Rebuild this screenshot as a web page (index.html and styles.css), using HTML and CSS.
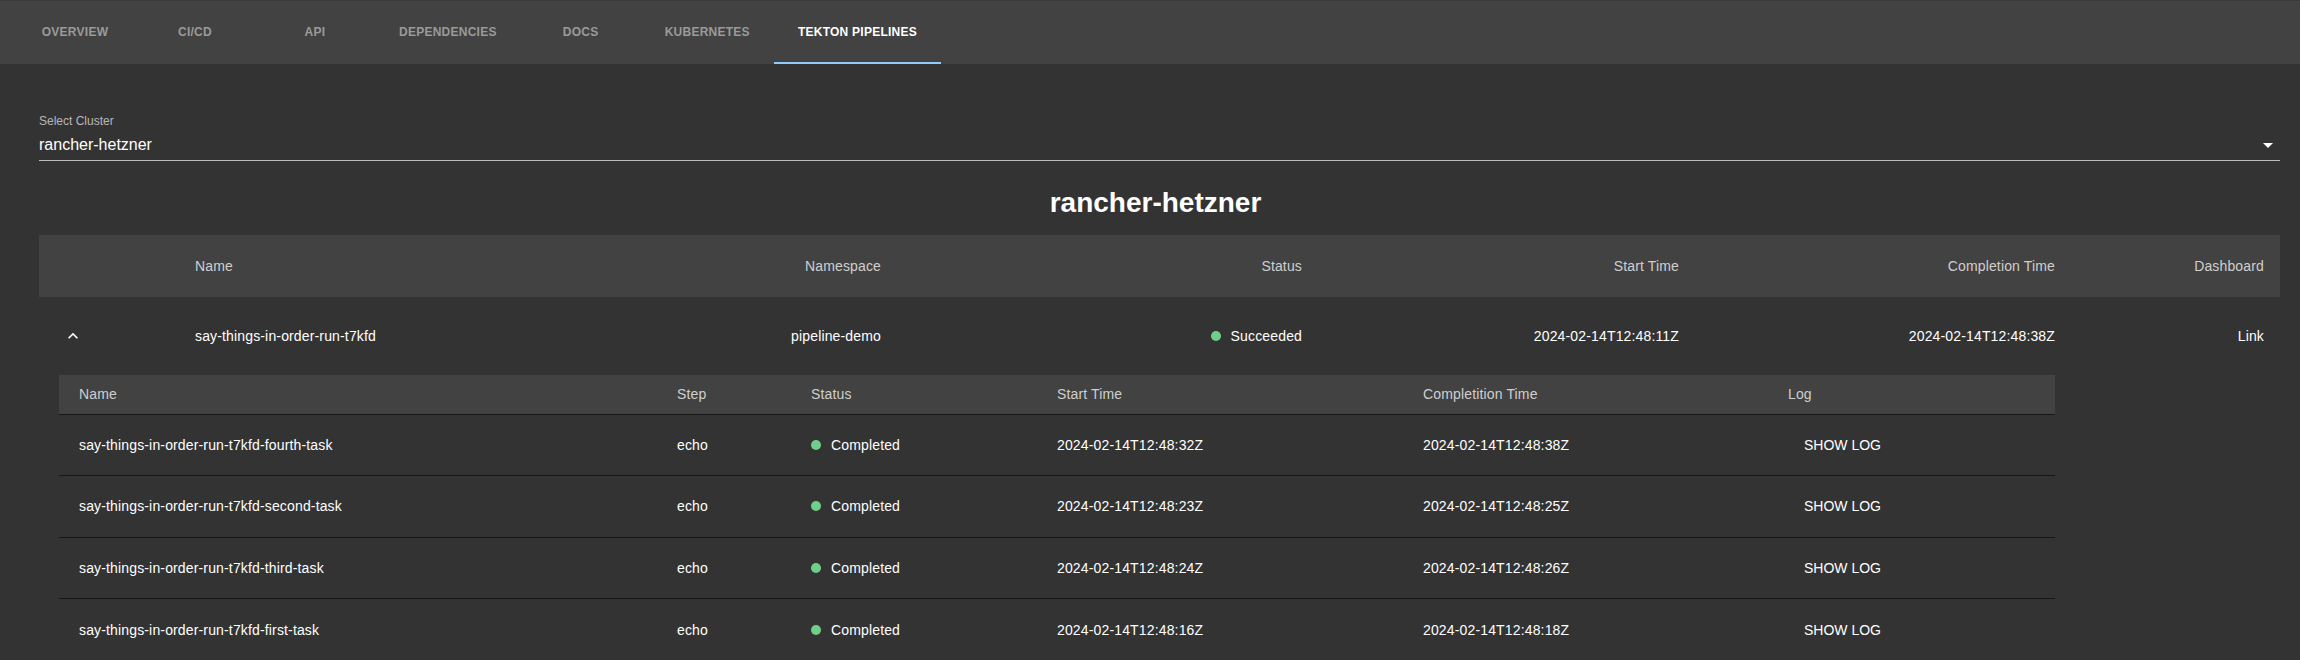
FILE: index.html
```html
<!DOCTYPE html>
<html lang="en">
<head>
<meta charset="utf-8">
<title>Tekton Pipelines</title>
<link rel="stylesheet" href="styles.css">
</head>
<body>
<nav class="tabs">
  <div class="tab">Overview</div>
  <div class="tab">CI/CD</div>
  <div class="tab">API</div>
  <div class="tab">Dependencies</div>
  <div class="tab">Docs</div>
  <div class="tab">Kubernetes</div>
  <div class="tab active">Tekton Pipelines</div>
</nav>

<main class="content">
  <div class="select">
    <label class="select-label">Select Cluster</label>
    <div class="select-value">
      <span>rancher-hetzner</span>
      <svg class="select-arrow" viewBox="0 0 24 24" width="24" height="24"><path d="M7 10l5 5 5-5z" fill="#fff"/></svg>
    </div>
  </div>

  <h2 class="cluster-title">rancher-hetzner</h2>

  <table class="runs">
    <colgroup>
      <col class="c-exp"><col class="c-name"><col class="c-ns"><col class="c-status"><col class="c-start"><col class="c-end"><col class="c-dash">
    </colgroup>
    <thead>
      <tr>
        <th></th>
        <th class="left">Name</th>
        <th>Namespace</th>
        <th>Status</th>
        <th>Start Time</th>
        <th>Completion Time</th>
        <th>Dashboard</th>
      </tr>
    </thead>
    <tbody>
      <tr class="run-row">
        <td class="left"><button class="expand"><svg viewBox="0 0 24 24" width="20" height="20"><path d="M7.41 15.41 12 10.83l4.59 4.58L18 14l-6-6-6 6z" fill="#fff"/></svg></button></td>
        <td class="left">say-things-in-order-run-t7kfd</td>
        <td>pipeline-demo</td>
        <td><span class="status"><span class="dot"></span>Succeeded</span></td>
        <td>2024-02-14T12:48:11Z</td>
        <td>2024-02-14T12:48:38Z</td>
        <td>Link</td>
      </tr>
      <tr class="detail-row">
        <td colspan="7">
          <div class="detail">
            <table class="tasks">
              <colgroup>
                <col class="t-name"><col class="t-step"><col class="t-status"><col class="t-start"><col class="t-end"><col class="t-log">
              </colgroup>
              <thead>
                <tr><th>Name</th><th>Step</th><th>Status</th><th>Start Time</th><th>Completition Time</th><th>Log</th></tr>
              </thead>
              <tbody>
                <tr><td>say-things-in-order-run-t7kfd-fourth-task</td><td>echo</td><td><span class="status"><span class="dot"></span>Completed</span></td><td>2024-02-14T12:48:32Z</td><td>2024-02-14T12:48:38Z</td><td><button class="log-btn">Show Log</button></td></tr>
                <tr><td>say-things-in-order-run-t7kfd-second-task</td><td>echo</td><td><span class="status"><span class="dot"></span>Completed</span></td><td>2024-02-14T12:48:23Z</td><td>2024-02-14T12:48:25Z</td><td><button class="log-btn">Show Log</button></td></tr>
                <tr><td>say-things-in-order-run-t7kfd-third-task</td><td>echo</td><td><span class="status"><span class="dot"></span>Completed</span></td><td>2024-02-14T12:48:24Z</td><td>2024-02-14T12:48:26Z</td><td><button class="log-btn">Show Log</button></td></tr>
                <tr><td>say-things-in-order-run-t7kfd-first-task</td><td>echo</td><td><span class="status"><span class="dot"></span>Completed</span></td><td>2024-02-14T12:48:16Z</td><td>2024-02-14T12:48:18Z</td><td><button class="log-btn">Show Log</button></td></tr>
              </tbody>
            </table>
          </div>
        </td>
      </tr>
    </tbody>
  </table>
</main>
</body>
</html>
```

FILE: styles.css
```css
* { box-sizing: border-box; }

html, body {
  margin: 0;
  background: #333333;
  color: #ffffff;
  font-family: "Liberation Sans", Arial, sans-serif;
  font-size: 14px;
}

/* ---------- tabs ---------- */
.tabs {
  display: flex;
  height: 64px;
  padding-left: 15px;
  background: #424242;
  border-top: 1px solid #3a3a3a;
}

.tab {
  min-width: 120px;
  padding: 0 24px;
  display: flex;
  align-items: center;
  justify-content: center;
  border-bottom: 2px solid transparent;
  color: #9a9a9a;
  font-size: 12px;
  font-weight: 700;
  letter-spacing: 0.25px;
  text-transform: uppercase;
  white-space: nowrap;
}

.tab.active {
  color: #ffffff;
  border-bottom-color: #90caf9;
}

/* ---------- content ---------- */
.content {
  padding: 51px 20px 0 39px;
}

.select {
  display: flex;
  flex-direction: column;
}

.select-label {
  font-size: 12px;
  line-height: 12px;
  color: #b8b8b8;
  margin-bottom: 5px;
}

.select-value {
  display: flex;
  align-items: center;
  justify-content: space-between;
  height: 29px;
  padding-bottom: 3px;
  border-bottom: 1px solid #bdbdbd;
  font-size: 16px;
  color: #ffffff;
}

.select-arrow {
  display: block;
}

.cluster-title {
  margin: 25px 0 16px;
  padding-right: 8px;
  font-size: 28px;
  line-height: 33px;
  font-weight: 700;
  text-align: center;
}

/* ---------- runs table ---------- */
table {
  border-collapse: collapse;
  table-layout: fixed;
}

th, td {
  letter-spacing: 0.01071em;
}

.runs {
  width: 100%;
}

.c-exp { width: 140px; }
.c-name { width: 361px; }
.c-ns { width: 357px; }
.c-status { width: 421px; }
.c-start { width: 377px; }
.c-end { width: 376px; }
.c-dash { width: 209px; }

.runs > thead th {
  height: 62px;
  padding: 0 16px;
  background: #424242;
  color: #cfcfcf;
  font-weight: 400;
  text-align: right;
  vertical-align: middle;
}

.runs > thead th.left,
.runs > tbody td.left {
  text-align: left;
}

.run-row > td {
  height: 78px;
  padding: 0 16px;
  text-align: right;
  vertical-align: middle;
  color: #ffffff;
}

.expand {
  display: inline-flex;
  padding: 8px;
  margin: 0;
  border: 0;
  background: transparent;
  vertical-align: middle;
}

.status {
  display: inline-flex;
  align-items: center;
  gap: 10px;
}

.dot {
  width: 10px;
  height: 10px;
  border-radius: 50%;
  background: #6fcf8a;
}

.detail-row > td {
  padding: 0;
}

.detail {
  padding-left: 20px;
}

/* ---------- tasks table ---------- */
.tasks {
  width: 1996px;
}

.t-name { width: 598px; }
.t-step { width: 134px; }
.t-status { width: 246px; }
.t-start { width: 366px; }
.t-end { width: 365px; }
.t-log { width: 287px; }

.tasks th {
  height: 39px;
  padding: 0 20px;
  background: #424242;
  color: #cfcfcf;
  font-weight: 400;
  text-align: left;
  vertical-align: middle;
  border-bottom: 1px solid #161616;
}

.tasks td {
  height: 61.67px;
  padding: 0 20px;
  text-align: left;
  vertical-align: middle;
  border-bottom: 1px solid #161616;
  color: #ffffff;
}

.log-btn {
  padding: 6px 16px;
  margin: 0;
  border: 0;
  background: transparent;
  color: #ffffff;
  font-family: "Liberation Sans", Arial, sans-serif;
  font-size: 14px;
  letter-spacing: 0;
  text-transform: uppercase;
}
```
